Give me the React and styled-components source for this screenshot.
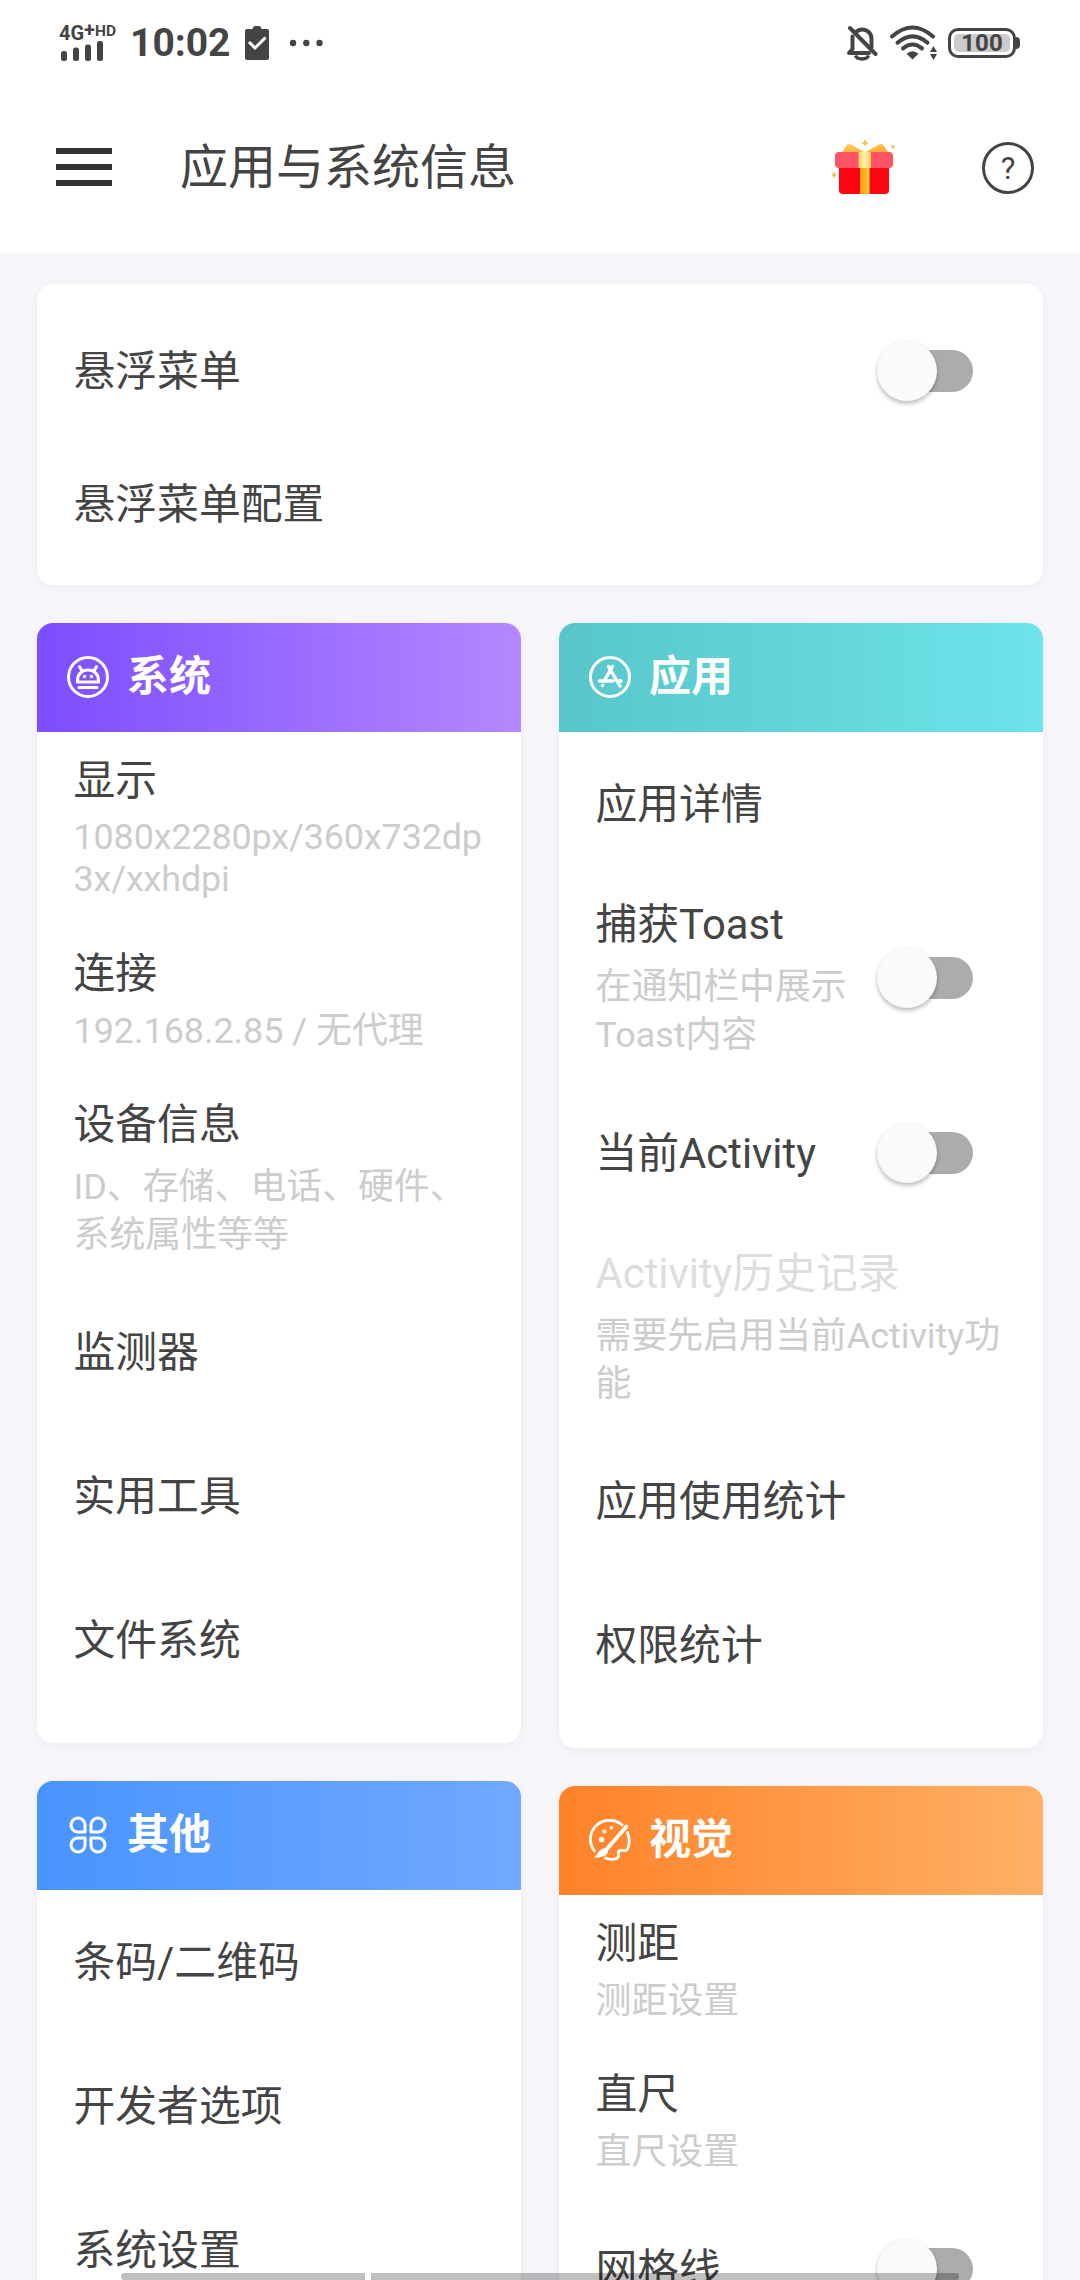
import React from 'react';
import styled, { createGlobalStyle } from 'styled-components';

const GlobalStyle = createGlobalStyle`
  * {
    box-sizing: border-box;
  }
  html,
  body {
    margin: 0;
    padding: 0;
  }
  body {
    width: 1080px;
    height: 2280px;
    overflow: hidden;
    background-color: #f6f6fb;
    color: #444;
    font-family: Roboto, 'Noto Sans CJK SC', sans-serif;
  }
  svg {
    display: block;
    flex: none;
  }
`;

const Screen = styled.div`
  position: relative;
  width: 1080px;
  height: 2280px;
  overflow: hidden;
`;

const StatusBar = styled.div`
  display: flex;
  justify-content: space-between;
  height: 83px;
  padding: 0 64px 0 59px;
  background-color: #fff;
`;

const StatusGroup = styled.div`
  display: flex;
  align-items: center;
  height: 85px;
`;

const Signal = styled.div`
  width: 71px;
`;

const Network = styled.div`
  display: flex;
  align-items: flex-start;
  height: 16px;
  font-size: 20px;
  font-weight: 700;
  line-height: 16px;
`;

const NetworkPlus = styled.span`
  line-height: 11px;
`;

const NetworkSup = styled.span`
  font-size: 15.5px;
  line-height: 12px;
`;

const Clock = styled.div`
  width: 115px;
  font-size: 39px;
  font-weight: 700;
  line-height: 46px;
`;

const Battery = styled.div`
  position: relative;
  display: flex;
  width: 68px;
  height: 30px;
  padding: 3px;
  border: 3px solid #444;
  border-radius: 10px;

  &::after {
    content: '';
    position: absolute;
    top: 6px;
    right: -7px;
    width: 4px;
    height: 12px;
    border-radius: 0 4px 4px 0;
    background-color: #444;
  }
`;

const BatteryLevel = styled.div`
  flex: 1;
  border-radius: 5px;
  background-color: #ccc;
  font-size: 24px;
  font-weight: 700;
  line-height: 19px;
  text-align: center;
`;

const AppBar = styled.header`
  display: flex;
  align-items: center;
  height: 170px;
  padding: 0 46px 1px 56px;
  background-color: #fff;
`;

const MenuButton = styled.div`
  display: flex;
  flex-direction: column;
  gap: 10px;
  width: 56px;
  margin: 0 68px 1px 0;

  span {
    height: 6px;
    background-color: #333;
  }
`;

const PageTitle = styled.h1`
  flex: 1;
  margin: 0;
  font-size: 48px;
  font-weight: 400;
  line-height: 60px;
`;

const HelpButton = styled.div`
  width: 52px;
  height: 52px;
  margin-left: 85px;
  border: 3px solid #444;
  border-radius: 50%;
  font-size: 31px;
  line-height: 48px;
  text-align: center;
`;

const Content = styled.main`
  padding: 31px 37px 0;
`;

const Card = styled.section`
  border-radius: 16px;
  background-color: #fff;
  box-shadow: 0 2px 12px rgba(0, 0, 0, 0.05);
  overflow: hidden;
`;

const TopCard = styled(Card)`
  height: 301px;
  padding-top: 20px;
  margin-bottom: 38px;
`;

const Columns = styled.div`
  display: grid;
  grid-template-columns: 484px 484px;
  justify-content: space-between;
`;

const Column = styled.div`
  display: flex;
  flex-direction: column;
  gap: 38px;
`;

const GroupCard = styled(Card)`
  padding-bottom: 31px;
`;

const GroupHeader = styled.div`
  display: flex;
  align-items: center;
  gap: 18px;
  height: 109px;
  padding: 0 0 1px 30px;
  background: linear-gradient(to right, ${(props) => props.$from}, ${(props) => props.$to});
  color: #fff;
  font-size: 42px;
  font-weight: 700;
  line-height: 50px;
`;

const rowHeights = { single: 144, top: 133, line: 151, latin: 192.5, wide: 204.5 };

const Row = styled.div`
  display: flex;
  align-items: ${(props) => (props.$kind === 'single' || props.$kind === 'top' ? 'center' : 'flex-start')};
  justify-content: space-between;
  height: ${(props) => rowHeights[props.$kind]}px;
  padding: 0 36px 0 36.5px;
`;

const RowText = styled.div`
  padding-top: ${(props) => (props.$stacked ? '21px' : '2px')};
  white-space: pre;
`;

const RowTitle = styled.div`
  color: ${(props) => (props.$disabled ? '#ddd' : '#444')};
  font-size: 41.8px;
  line-height: 56px;
`;

const subMargins = { latin: 7, line: 8, wide: 10 };

const RowSub = styled.div`
  margin-top: ${(props) => subMargins[props.$kind]}px;
  color: #ccc;
  font-size: 35.9px;
  line-height: ${(props) => (props.$kind === 'wide' ? 48 : 42)}px;
  letter-spacing: ${(props) => (props.$kind === 'latin' ? '-0.12px' : '0')};
`;

const Track = styled.div`
  display: flex;
  align-items: center;
  align-self: center;
  width: 88px;
  height: 42px;
  margin-right: 34px;
  border-radius: 21px;
  background-color: #acacac;
`;

const Thumb = styled.div`
  flex: none;
  width: 60px;
  height: 60px;
  margin-left: -8px;
  border-radius: 50%;
  background-color: #fafafa;
  box-shadow: 0 3px 4px rgba(0, 0, 0, 0.24), 0 0 3px rgba(0, 0, 0, 0.06);
`;

const NavHints = styled.div`
  position: absolute;
  left: 121px;
  bottom: 0;
  display: flex;
  width: 838px;
  height: 7px;
`;

const NavHint = styled.div`
  width: ${(props) => props.$width}px;
  border-radius: ${(props) => props.$radius};
  background-color: rgba(0, 0, 0, 0.25);
`;

const NavGap = styled.div`
  width: 6px;
  background-color: #fff;
`;

const SignalBars = () => (
  <svg width="46" height="20" viewBox="0 0 46 20" fill="#444">
    <rect x="2" y="10" width="6" height="10" rx="2.5" />
    <rect x="14" y="6.500" width="6" height="13.500" rx="2.5" />
    <rect x="26" y="3.500" width="6" height="16.500" rx="2.5" />
    <rect x="38" y="0" width="6" height="20" rx="2.5" />
  </svg>
);

const ClipboardIcon = () => (
  <svg width="24" height="34" viewBox="0 0 24 34">
    <path
      fill="#444"
      d="M2 3h5.500q.5-3 3-3h3q2.500 0 3 3H22a2 2 0 0 1 2 2v27a2 2 0 0 1-2 2H2a2 2 0 0 1-2-2V5a2 2 0 0 1 2-2z"
    />
    <path d="M4 16l6 6L20.500 11.500" fill="none" stroke="#fff" strokeWidth="3" />
  </svg>
);

const MoreDots = () => (
  <svg width="34" height="8" viewBox="0 0 34 8" fill="#444">
    <circle cx="4" cy="4" r="3.200" />
    <circle cx="17.300" cy="4" r="3.200" />
    <circle cx="30.500" cy="4" r="3.200" />
  </svg>
);

const BellOffIcon = () => (
  <svg width="32" height="36" viewBox="0 0 32 36" fill="none" stroke="#444" strokeWidth="4">
    <path d="M6.500 11.500V24L3 28h20" strokeLinejoin="round" strokeLinecap="round" />
    <path d="M10.500 6.500C17 2 25.500 6 25.500 14v8" strokeLinecap="round" />
    <path d="M9.500 30.500c1.500 4.500 11.500 4.500 13 0" strokeWidth="3.500" />
    <path d="M4 3l25.500 26" strokeLinecap="round" />
  </svg>
);

const WifiIcon = () => (
  <svg width="48" height="36" viewBox="0 0 48 36" fill="none" stroke="#444" strokeWidth="4">
    <path d="M3 11.500Q23.500 -6.500 44 11.500" strokeLinecap="round" />
    <path d="M8.500 17.800Q23.500 5 38.500 17.800" strokeLinecap="round" />
    <path d="M14 23.400Q23.500 15.600 33 23.400" strokeLinecap="round" />
    <path d="M17.500 28.800Q23.500 23.500 29.500 28.800L23.500 34.500z" fill="#444" stroke="none" />
    <path d="M41 27l3.500-6 3.500 6zM41 29l3.500 6 3.500-6z" fill="#444" stroke="none" />
  </svg>
);

const GiftIcon = () => (
  <svg width="66" height="60" viewBox="0 0 66 60">
    <defs>
      <linearGradient id="bow" x1="0" y1="0" x2="1" y2="1">
        <stop offset="0" stopColor="#ffd061" />
        <stop offset="1" stopColor="#f7a928" />
      </linearGradient>
      <linearGradient id="ribbonTop" x1="0" y1="0" x2="1" y2="0">
        <stop offset="0" stopColor="#ffd05c" />
        <stop offset="0.5" stopColor="#fff0b0" />
        <stop offset="1" stopColor="#ffc74d" />
      </linearGradient>
      <linearGradient id="ribbonBottom" x1="0" y1="0" x2="1" y2="0">
        <stop offset="0" stopColor="#ffa312" />
        <stop offset="0.6" stopColor="#ffb31f" />
        <stop offset="1" stopColor="#ffd24f" />
      </linearGradient>
    </defs>
    <path d="M11 14l4-6q2-3 5-1.500L33 14zM35 14l13-7.500q3-1.500 5 1.500l4 6z" fill="url(#bow)" />
    <path d="M8 28h50v24a4 4 0 0 1-4 4H12a4 4 0 0 1-4-4z" fill="#fc0511" />
    <rect x="4" y="14" width="58" height="16" rx="4" fill="#ff5263" />
    <rect x="29" y="30" width="9.500" height="26" fill="url(#ribbonBottom)" />
    <rect x="27.500" y="14" width="12.500" height="16" fill="url(#ribbonTop)" />
    <path d="M34 1.500l1.200 2.300L37.500 5l-2.300 1.200L34 8.500l-1.200-2.300L30.500 5l2.300-1.200z" fill="#fbc14b" />
    <path d="M62 6.500l2.200 2.200L62 11l-2.200-2.300z" fill="#fbc14b" />
    <path d="M3 33l1.100 2.900L6 37l-1.900 1.100L3 41l-1.100-2.900L0 37l1.900-1.100z" fill="#fbc14b" />
  </svg>
);

const SystemIcon = () => (
  <svg width="42" height="42" viewBox="0 0 42 42" fill="none" stroke="#fff" strokeWidth="3">
    <circle cx="21" cy="21" r="19.500" />
    <path d="M10.500 26v-1.500C10.500 18 15 14 21 14s10.500 4 10.500 10.500V26z" strokeLinejoin="round" />
    <path d="M12.500 10.500l2.800 5M29.500 10.500l-2.800 5M12 31.500h18" strokeLinecap="round" />
    <circle cx="17.500" cy="20.500" r="1.700" fill="#fff" stroke="none" />
    <circle cx="24.500" cy="20.500" r="1.700" fill="#fff" stroke="none" />
  </svg>
);

const AppIcon = () => (
  <svg width="42" height="42" viewBox="0 0 42 42" fill="none" stroke="#fff" strokeWidth="3.4" strokeLinecap="round">
    <circle cx="21" cy="21" r="19.500" strokeWidth="3" />
    <path d="M19.500 10.500L31 30M23.500 10.500L15 25M10.500 25H24M29 25h3M13.500 29.500l.2-.3" />
  </svg>
);

const CloverIcon = () => (
  <svg width="42" height="42" viewBox="0 0 42 42" fill="none" stroke="#fff" strokeWidth="3" strokeLinejoin="round">
    <path d="M18 18h-7.500A7 7 0 1 1 18 10.500z" />
    <path d="M24 18v-7.500A7 7 0 1 1 31.500 18z" />
    <path d="M18 24v7.500A7 7 0 1 1 10.500 24z" />
    <path d="M24 24h7.500A7 7 0 1 1 24 31.500z" />
  </svg>
);

const PaletteIcon = () => (
  <svg width="42" height="42" viewBox="0 0 42 42" fill="none" stroke="#fff" strokeWidth="2.8" strokeLinecap="round">
    <path d="M5.500 32A19 19 0 0 1 33 6" />
    <path d="M38.500 13.500C41.500 21 40 31 36.500 31.500c-3 .3-6-1-7 1-.8 1.700 1.200 4.300-.5 6-2.500 2.500-8.500 2.300-12.500.5" />
    <path d="M37.500 7.500L17 31" strokeWidth="3.8" />
    <path d="M15.500 29c2 .5 3.500 2 3.500 4-1.500 4.500-8 6-14.500 5.500 4-1.500 4-7.500 11-9.500z" fill="#fff" stroke="none" />
    <circle cx="12.500" cy="20.500" r="2.700" fill="#fff" stroke="none" />
    <circle cx="15.500" cy="12.500" r="2.100" fill="#fff" stroke="none" />
    <circle cx="22.500" cy="8.800" r="1.800" fill="#fff" stroke="none" />
  </svg>
);

const Switch = () => (
  <Track role="switch" aria-checked="false">
    <Thumb />
  </Track>
);

const Item = ({ title, sub, kind = 'single', toggle, disabled }) => (
  <Row $kind={kind}>
    <RowText $stacked={Boolean(sub)}>
      <RowTitle $disabled={disabled}>{title}</RowTitle>
      {sub && <RowSub $kind={kind}>{sub}</RowSub>}
    </RowText>
    {toggle && <Switch />}
  </Row>
);

const Group = ({ title, icon, from, to, items }) => (
  <GroupCard>
    <GroupHeader $from={from} $to={to}>
      {icon}
      {title}
    </GroupHeader>
    {items.map((item) => (
      <Item key={item.title} {...item} />
    ))}
  </GroupCard>
);

const systemItems = [
  { title: '显示', sub: '1080x2280px/360x732dp\n3x/xxhdpi', kind: 'latin' },
  { title: '连接', sub: '192.168.2.85 / 无代理', kind: 'line' },
  { title: '设备信息', sub: 'ID、存储、电话、硬件、\n系统属性等等', kind: 'wide' },
  { title: '监测器' },
  { title: '实用工具' },
  { title: '文件系统' },
];

const appItems = [
  { title: '应用详情' },
  { title: '捕获Toast', sub: '在通知栏中展示\nToast内容', kind: 'wide', toggle: true },
  { title: '当前Activity', toggle: true },
  { title: 'Activity历史记录', sub: '需要先启用当前Activity功\n能', kind: 'wide', disabled: true },
  { title: '应用使用统计' },
  { title: '权限统计' },
];

const otherItems = [{ title: '条码/二维码' }, { title: '开发者选项' }, { title: '系统设置' }];

const visualItems = [
  { title: '测距', sub: '测距设置', kind: 'line' },
  { title: '直尺', sub: '直尺设置', kind: 'line' },
  { title: '网格线', toggle: true },
];

const LeftStatus = styled(StatusGroup)`
  ${Clock} + svg {
    margin-right: 20px;
  }
`;

const RightStatus = styled(StatusGroup)`
  gap: 11px;
`;

const App = () => {
  return (
    <Screen lang="zh-CN">
      <GlobalStyle />
      <StatusBar>
        <LeftStatus>
          <Signal>
            <Network>
              4G
              <NetworkPlus>+</NetworkPlus>
              <NetworkSup>HD</NetworkSup>
            </Network>
            <SignalBars />
          </Signal>
          <Clock>10:02</Clock>
          <ClipboardIcon />
          <MoreDots />
        </LeftStatus>
        <RightStatus>
          <BellOffIcon />
          <WifiIcon />
          <Battery>
            <BatteryLevel>100</BatteryLevel>
          </Battery>
        </RightStatus>
      </StatusBar>
      <AppBar>
        <MenuButton>
          <span />
          <span />
          <span />
        </MenuButton>
        <PageTitle>应用与系统信息</PageTitle>
        <GiftIcon />
        <HelpButton>?</HelpButton>
      </AppBar>
      <Content>
        <TopCard>
          <Item title="悬浮菜单" kind="top" toggle />
          <Item title="悬浮菜单配置" kind="top" />
        </TopCard>
        <Columns>
          <Column>
            <Group title="系统" icon={<SystemIcon />} from="#7c4dff" to="#b388ff" items={systemItems} />
            <Group title="其他" icon={<CloverIcon />} from="#4894ff" to="#72a8ff" items={otherItems} />
          </Column>
          <Column>
            <Group title="应用" icon={<AppIcon />} from="#58c6ca" to="#6de4ea" items={appItems} />
            <Group title="视觉" icon={<PaletteIcon />} from="#ff8228" to="#ffb066" items={visualItems} />
          </Column>
        </Columns>
      </Content>
      <NavHints>
        <NavHint $width={244} $radius="4px 0 0 4px" />
        <NavGap />
        <NavHint $width={588} $radius="0 4px 4px 0" />
      </NavHints>
    </Screen>
  );
};

export default App;
